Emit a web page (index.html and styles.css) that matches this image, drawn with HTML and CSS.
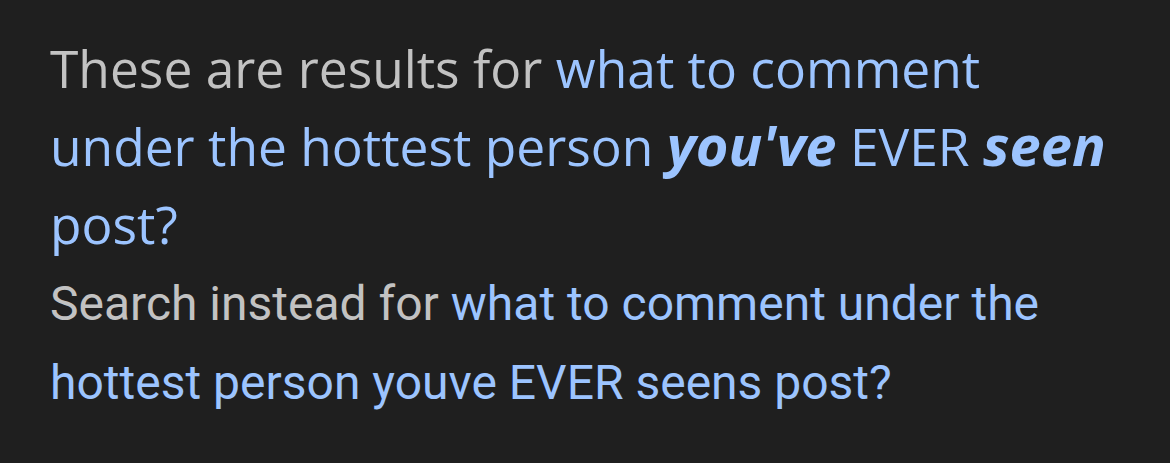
FILE: index.html
```html
<!DOCTYPE html>
<html>
<head>
<meta charset="utf-8">
<link rel="stylesheet" href="styles.css">
</head>
<body>
<div class="spelling">
  <p class="showing">These are results for <a class="link" href="#">what to comment<br>under the hottest person <b class="em">you've</b> EVER <b class="em">seen</b><br>post?</a></p>
  <p class="instead">Search instead for <a class="link" href="#">what to comment under the<br>hottest person youve EVER seens post?</a></p>
</div>
</body>
</html>
```
FILE: styles.css
```css
html, body {
  margin: 0;
  padding: 0;
  background: #1f1f1f;
}
body {
  width: 1170px;
  height: 463px;
  overflow: hidden;
}
.spelling {
  padding: 29px 0 0 50px;
}
.showing {
  margin: 0;
  font-family: "Open Sans", sans-serif;
  font-size: 51.5px;
  line-height: 78px;
  color: #c2c2c2;
}
.em {
  font-weight: 700;
  font-style: italic;
  font-size: 56px;
  line-height: 1;
}
.instead {
  margin: 0;
  font-family: Roboto, sans-serif;
  font-size: 48px;
  line-height: 79px;
  padding-top: 1px;
  color: #c2c2c2;
}
.link {
  color: #9cc4ff;
  text-decoration: none;
}
```
